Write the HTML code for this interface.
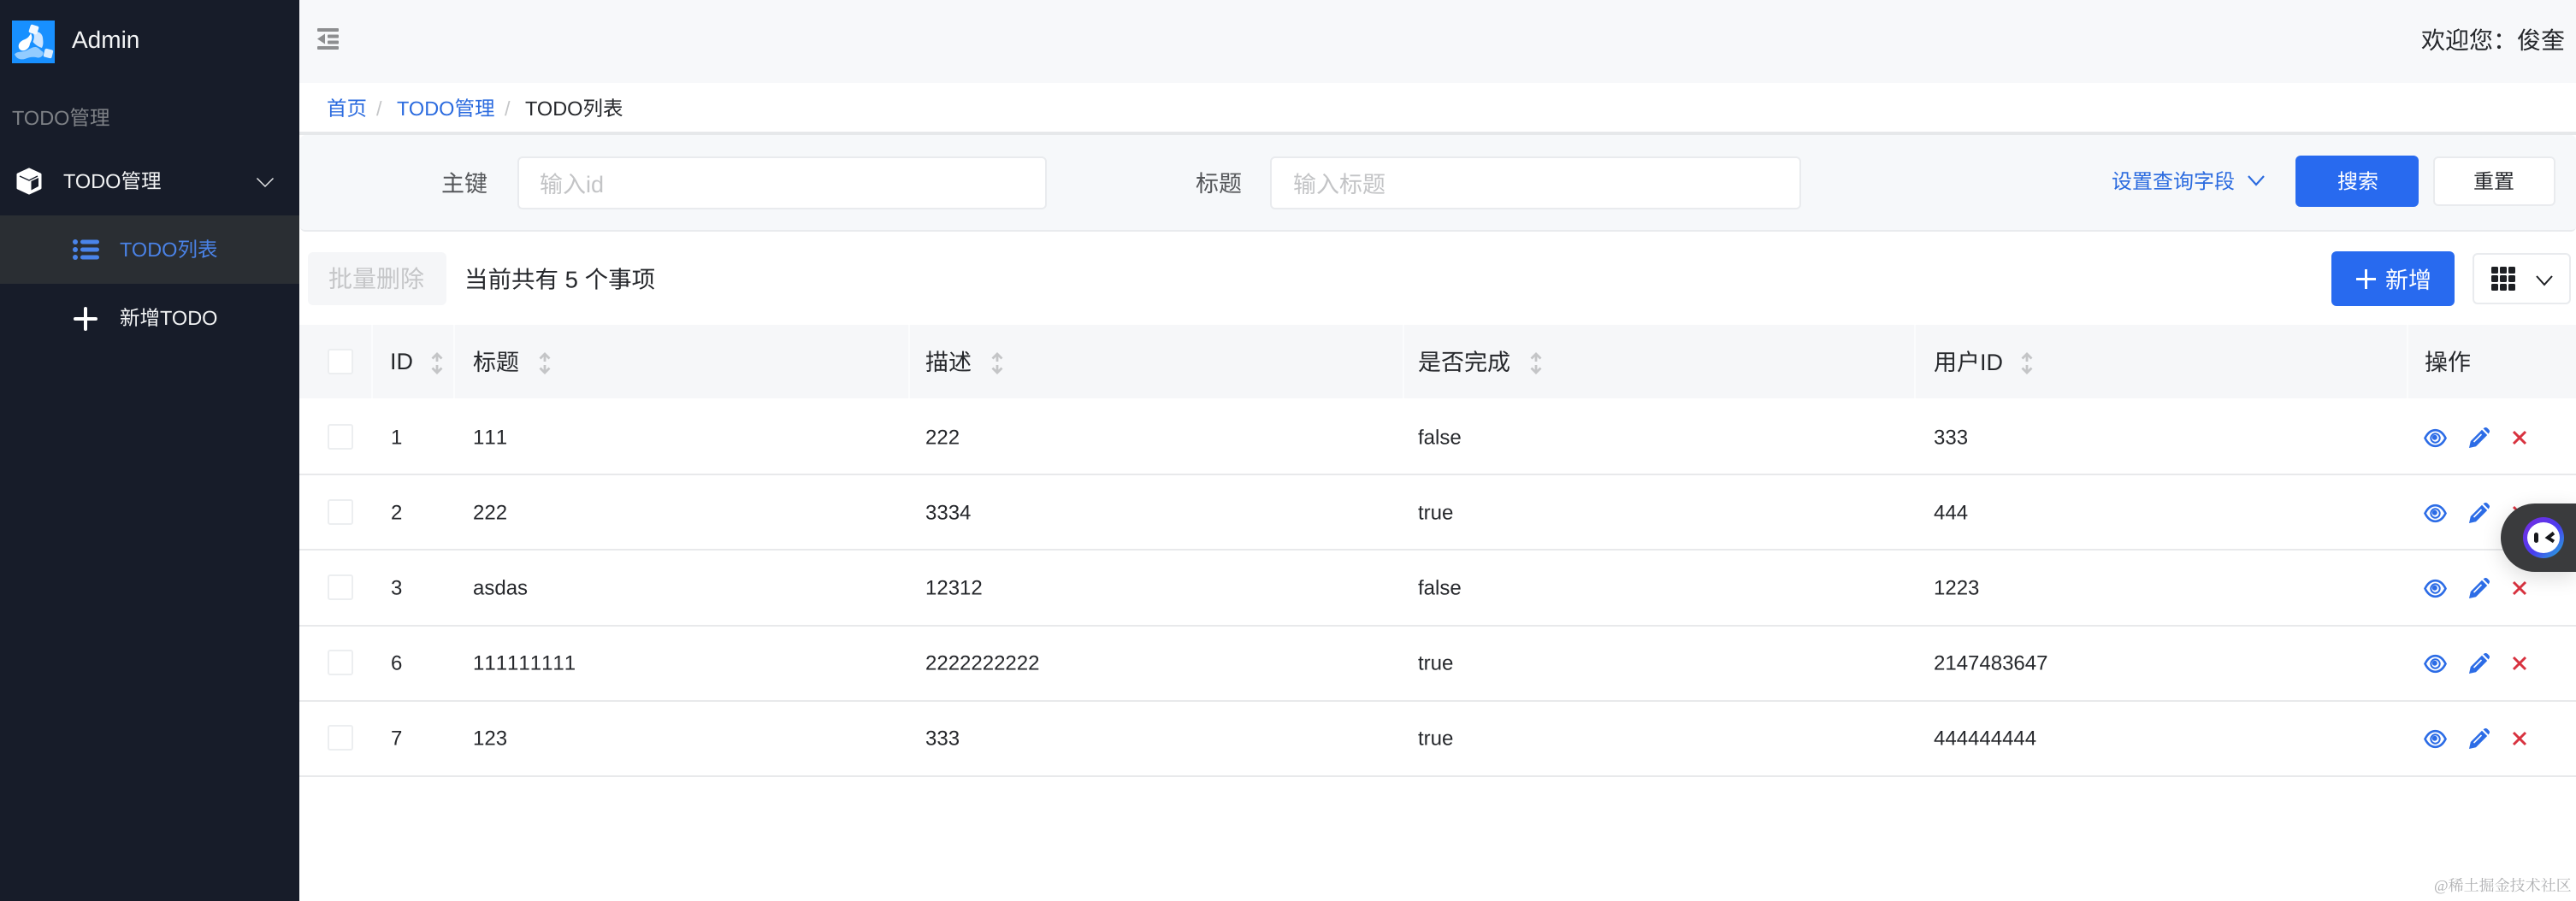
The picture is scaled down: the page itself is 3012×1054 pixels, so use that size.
<!DOCTYPE html>
<html lang="zh-CN">
<head>
<meta charset="utf-8">
<title>Admin</title>
<style>
html,body{margin:0;padding:0;width:3012px;height:1054px;overflow:hidden;background:#fff}
body{position:relative;font-family:"Liberation Sans","Noto Sans CJK SC",sans-serif;color:#222;text-rendering:geometricPrecision}
.a{position:absolute;box-sizing:border-box}
.t{position:absolute;white-space:nowrap;transform:translateY(-50%);line-height:1.2}
svg{position:absolute;overflow:visible}
.cell{font-size:24px;color:#26282c;font-kerning:none}
.hd{font-size:27px;color:#26282c}
.line{position:absolute;left:350px;width:2662px;height:2px;background:#e8e9eb}
.cb{position:absolute;left:383px;width:30px;height:30px;border:2px solid #eceef0;border-radius:3px;background:#fff;box-sizing:border-box}
.sep{position:absolute;top:380px;width:2px;height:86px;background:#fbfcfd}
</style>
</head>
<body>
<svg width="0" height="0" style="position:absolute">
<defs>
<symbol id="sort" viewBox="0 0 14 24" overflow="visible"><path d="M7 10V1M1.500 6.500L7 1L12.500 6.500M7 14V23M1.500 17.500L7 23L12.500 17.500" fill="none" stroke="#c4c5c7" stroke-width="2.800"/></symbol>
<symbol id="eye" viewBox="0 0 27 21" overflow="visible"><path d="M1.500 10.500C5 3.500 9 1.200 13.500 1.200S22 3.500 25.500 10.500C22 17.500 18 19.800 13.500 19.800S5 17.500 1.500 10.500Z" fill="none" stroke="#2c6ce6" stroke-width="2.600"/><circle cx="13.500" cy="10.500" r="5.200" fill="none" stroke="#2c6ce6" stroke-width="2"/><circle cx="12.800" cy="9.800" r="3" fill="#2c6ce6"/></symbol>
<symbol id="pen" viewBox="0 0 24 24" overflow="visible"><path d="M0 24L1.800 16L15 2.800L21.200 9L8 22.200Z" fill="#2c6ce6"/><path d="M16.500 1.300L17.800.5C19-.3 20.400-.1 21.500.9L23.200 2.600C24.200 3.700 24.300 4.800 23.500 6L22.700 7.500Z" fill="#2c6ce6"/><path d="M5.500 17L14.500 8" stroke="#fff" stroke-width="1.600"/></symbol>
<symbol id="del" viewBox="0 0 16 14" overflow="visible"><path d="M1 0L15 14M15 0L1 14" stroke="#d8323f" stroke-width="3" fill="none"/></symbol>
</defs>
</svg>

<!-- Sidebar -->
<div class="a" style="left:0;top:0;width:350px;height:1054px;background:#171c29"></div>
<div class="a" style="left:14px;top:24px;width:50px;height:50px;background:#1890ff"></div>
<svg style="left:14px;top:24px" width="50" height="50" viewBox="0 0 50 50">
<path d="M3 39.500C6 36 10 37 14 36C19 35 23 30.500 28 31C32 32 33 35 36 36.500C38 40 34 44 30 43.500C24 42 20 43 15 45C9 46.500 5 44 3 39.500Z" fill="#93ccff"/>
<path d="M24.500 14C29 11.500 35 14 36 20C36.500 25 37 28 35 32C31 31 27 28 24.500 25C26 21 26.500 18 24.500 14Z" fill="#cfe6ff"/>
<path d="M22 15C25 20 22.500 24 21 27C20.500 34 12 38 8.500 33C6 28 10 24 14 22.500C18 21 20 19 22 15Z" fill="#fff"/>
<rect x="20.500" y="5.500" width="10" height="10" rx="2" transform="rotate(18 25.500 10.500)" fill="#f2f8ff"/>
<rect x="37.500" y="33.500" width="10" height="10" rx="2" transform="rotate(14 42.500 38.500)" fill="#d8ecff"/>
</svg>
<div class="t" style="left:84px;top:47px;font-size:28px;color:#f4f5f6">Admin</div>
<div class="t" style="left:14px;top:138px;font-size:23.500px;color:#7e8186">TODO管理</div>

<svg style="left:18px;top:196px" width="32" height="32" viewBox="0 0 32 32">
<path d="M16 2L29 8V24L16 30L3 24V8Z" fill="#fff" stroke="#fff" stroke-width="3" stroke-linejoin="round"/>
<path d="M18.500 16L27 12V22L18.500 26.500Z" fill="#171c29"/>
<path d="M5 10L16 15L26 10" fill="none" stroke="#171c29" stroke-width="1.400"/>
</svg>
<div class="t" style="left:74px;top:212px;font-size:23.500px;color:#f2f3f4">TODO管理</div>
<svg style="left:300px;top:208px" width="20" height="11" viewBox="0 0 20 11"><path d="M.5.5L10 10L19.500.5" fill="none" stroke="#e4e5e7" stroke-width="1.500"/></svg>

<div class="a" style="left:0;top:252px;width:350px;height:80px;background:#2a2e33"></div>
<svg style="left:85px;top:279px" width="31" height="26" viewBox="0 0 31 26" fill="#4a84ea">
<circle cx="3" cy="4" r="3"/><circle cx="3" cy="13" r="3"/><circle cx="3" cy="22" r="3"/>
<rect x="9" y="1.500" width="22" height="5" rx="2.500"/><rect x="9" y="10.500" width="22" height="5" rx="2.500"/><rect x="9" y="19.500" width="22" height="5" rx="2.500"/>
</svg>
<div class="t" style="left:140px;top:292px;font-size:23.500px;color:#4a82e6">TODO列表</div>

<svg style="left:87px;top:360px" width="26" height="26" viewBox="0 0 26 26"><path d="M13 1V25M1 13H25" stroke="#fff" stroke-width="4" stroke-linecap="round"/></svg>
<div class="t" style="left:140px;top:372px;font-size:23.500px;color:#f2f3f4">新增TODO</div>

<!-- Header -->
<div class="a" style="left:350px;top:0;width:2662px;height:97px;background:#f7f8fa"></div>
<svg style="left:371px;top:33px" width="25" height="25" viewBox="0 0 25 25" fill="#8d8e90">
<rect x="0" y="0" width="25" height="4" rx="1"/><rect x="12" y="7.500" width="13" height="4" rx="1"/><rect x="12" y="14.500" width="13" height="4" rx="1"/><rect x="0" y="21" width="25" height="4" rx="1"/>
<path d="M0 12.500L9 6.500V18.500Z"/>
</svg>
<div class="t" style="left:2831px;top:48px;font-size:28px;color:#26282c">欢迎您：俊奎</div>

<!-- Breadcrumb -->
<div class="t" style="left:382px;top:127px;font-size:23.500px;color:#2b6bdf">首页</div>
<div class="t" style="left:440px;top:127px;font-size:23.500px;color:#c5c6c8">/</div>
<div class="t" style="left:464px;top:127px;font-size:23.500px;color:#2b6bdf">TODO管理</div>
<div class="t" style="left:590px;top:127px;font-size:23.500px;color:#c5c6c8">/</div>
<div class="t" style="left:614px;top:127px;font-size:23.500px;color:#26282c">TODO列表</div>
<div class="a" style="left:350px;top:154px;width:2662px;height:4px;background:#e6e8ea"></div>

<!-- Search panel -->
<div class="a" style="left:351px;top:158px;width:2661px;height:113px;background:#f6f8fa;border-bottom:2px solid #e9ebee;border-radius:6px"></div>
<div class="t" style="left:516px;top:215px;font-size:27px;color:#55575a">主键</div>
<div class="a" style="left:605px;top:183px;width:619px;height:62px;background:#fff;border:2px solid #e9ebee;border-radius:6px"></div>
<div class="t" style="left:631px;top:216px;font-size:27px;color:#c3c4c6">输入id</div>
<div class="t" style="left:1398px;top:215px;font-size:27px;color:#55575a">标题</div>
<div class="a" style="left:1485px;top:183px;width:621px;height:62px;background:#fff;border:2px solid #e9ebee;border-radius:6px"></div>
<div class="t" style="left:1512px;top:216px;font-size:27px;color:#c3c4c6">输入标题</div>
<div class="t" style="left:2469px;top:214px;font-size:24px;color:#2b6bdf">设置查询字段</div>
<svg style="left:2628px;top:205px" width="20" height="12" viewBox="0 0 20 12"><path d="M1 1L10 11L19 1" fill="none" stroke="#2b6bdf" stroke-width="2.200"/></svg>
<div class="a" style="left:2684px;top:182px;width:144px;height:60px;background:#286aef;border-radius:6px"></div>
<div class="t" style="left:2733px;top:214px;font-size:24px;color:#fff">搜索</div>
<div class="a" style="left:2845px;top:183px;width:143px;height:58px;background:#fff;border:2px solid #e9ebee;border-radius:6px"></div>
<div class="t" style="left:2892px;top:214px;font-size:24px;color:#26282c">重置</div>

<!-- Toolbar -->
<div class="a" style="left:360px;top:295px;width:162px;height:62px;background:#f5f6f8;border-radius:6px"></div>
<div class="t" style="left:384px;top:327px;font-size:28px;color:#c5c6c8">批量删除</div>
<div class="t" style="left:543px;top:327px;font-size:27.500px;color:#26282c">当前共有 5 个事项</div>
<div class="a" style="left:2726px;top:294px;width:144px;height:64px;background:#286aef;border-radius:6px"></div>
<svg style="left:2755px;top:315px" width="23" height="23" viewBox="0 0 23 23"><path d="M11.500 0V23M0 11.500H23" stroke="#fff" stroke-width="3"/></svg>
<div class="t" style="left:2789px;top:328px;font-size:27px;color:#fff">新增</div>
<div class="a" style="left:2891px;top:296px;width:115px;height:60px;background:#fff;border:2px solid #e9ebee;border-radius:6px"></div>
<svg style="left:2913px;top:312px" width="28" height="28" viewBox="0 0 28 28" fill="#1d1f23">
<rect x="0" y="0" width="8" height="8" rx="1.500"/><rect x="10" y="0" width="8" height="8" rx="1.500"/><rect x="20" y="0" width="8" height="8" rx="1.500"/>
<rect x="0" y="10" width="8" height="8" rx="1.500"/><rect x="10" y="10" width="8" height="8" rx="1.500"/><rect x="20" y="10" width="8" height="8" rx="1.500"/>
<rect x="0" y="20" width="8" height="8" rx="1.500"/><rect x="10" y="20" width="8" height="8" rx="1.500"/><rect x="20" y="20" width="8" height="8" rx="1.500"/>
</svg>
<svg style="left:2965px;top:322px" width="20" height="12" viewBox="0 0 20 12"><path d="M1 1L10 11L19 1" fill="none" stroke="#1d1f23" stroke-width="2"/></svg>

<!-- Table header -->
<div class="a" style="left:350px;top:380px;width:2662px;height:86px;background:#f6f7f9"></div>
<div class="sep" style="left:434px"></div>
<div class="sep" style="left:530px"></div>
<div class="sep" style="left:1062px"></div>
<div class="sep" style="left:1640px"></div>
<div class="sep" style="left:2238px"></div>
<div class="sep" style="left:2814px"></div>
<div class="cb" style="top:408px"></div>
<div class="t hd" style="left:456px;top:423px">ID</div>
<svg style="left:504px;top:413px" width="14" height="24"><use href="#sort"/></svg>
<div class="t hd" style="left:553px;top:424px">标题</div>
<svg style="left:630px;top:413px" width="14" height="24"><use href="#sort"/></svg>
<div class="t hd" style="left:1082px;top:424px">描述</div>
<svg style="left:1159px;top:413px" width="14" height="24"><use href="#sort"/></svg>
<div class="t hd" style="left:1658px;top:424px">是否完成</div>
<svg style="left:1789px;top:413px" width="14" height="24"><use href="#sort"/></svg>
<div class="t hd" style="left:2261px;top:424px">用户ID</div>
<svg style="left:2363px;top:413px" width="14" height="24"><use href="#sort"/></svg>
<div class="t hd" style="left:2835px;top:424px">操作</div>

<!-- Row 1 -->
<div class="cb" style="top:496px"></div>
<div class="t cell" style="left:457px;top:513px">1</div>
<div class="t cell" style="left:553px;top:513px">111</div>
<div class="t cell" style="left:1082px;top:513px">222</div>
<div class="t cell" style="left:1658px;top:513px">false</div>
<div class="t cell" style="left:2261px;top:513px">333</div>
<svg style="left:2834px;top:502px" width="27" height="21"><use href="#eye"/></svg>
<svg style="left:2887px;top:500px" width="24" height="24"><use href="#pen"/></svg>
<svg style="left:2938px;top:505px" width="16" height="14"><use href="#del"/></svg>
<div class="line" style="top:554px"></div>

<!-- Row 2 -->
<div class="cb" style="top:584px"></div>
<div class="t cell" style="left:457px;top:601px">2</div>
<div class="t cell" style="left:553px;top:601px">222</div>
<div class="t cell" style="left:1082px;top:601px">3334</div>
<div class="t cell" style="left:1658px;top:601px">true</div>
<div class="t cell" style="left:2261px;top:601px">444</div>
<svg style="left:2834px;top:590px" width="27" height="21"><use href="#eye"/></svg>
<svg style="left:2887px;top:588px" width="24" height="24"><use href="#pen"/></svg>
<svg style="left:2938px;top:593px" width="16" height="14"><use href="#del"/></svg>
<div class="line" style="top:642px"></div>

<!-- Row 3 -->
<div class="cb" style="top:672px"></div>
<div class="t cell" style="left:457px;top:689px">3</div>
<div class="t cell" style="left:553px;top:689px">asdas</div>
<div class="t cell" style="left:1082px;top:689px">12312</div>
<div class="t cell" style="left:1658px;top:689px">false</div>
<div class="t cell" style="left:2261px;top:689px">1223</div>
<svg style="left:2834px;top:678px" width="27" height="21"><use href="#eye"/></svg>
<svg style="left:2887px;top:676px" width="24" height="24"><use href="#pen"/></svg>
<svg style="left:2938px;top:681px" width="16" height="14"><use href="#del"/></svg>
<div class="line" style="top:731px"></div>

<!-- Row 4 -->
<div class="cb" style="top:760px"></div>
<div class="t cell" style="left:457px;top:777px">6</div>
<div class="t cell" style="left:553px;top:777px">111111111</div>
<div class="t cell" style="left:1082px;top:777px">2222222222</div>
<div class="t cell" style="left:1658px;top:777px">true</div>
<div class="t cell" style="left:2261px;top:777px">2147483647</div>
<svg style="left:2834px;top:766px" width="27" height="21"><use href="#eye"/></svg>
<svg style="left:2887px;top:764px" width="24" height="24"><use href="#pen"/></svg>
<svg style="left:2938px;top:769px" width="16" height="14"><use href="#del"/></svg>
<div class="line" style="top:819px"></div>

<!-- Row 5 -->
<div class="cb" style="top:848px"></div>
<div class="t cell" style="left:457px;top:865px">7</div>
<div class="t cell" style="left:553px;top:865px">123</div>
<div class="t cell" style="left:1082px;top:865px">333</div>
<div class="t cell" style="left:1658px;top:865px">true</div>
<div class="t cell" style="left:2261px;top:865px">444444444</div>
<svg style="left:2834px;top:854px" width="27" height="21"><use href="#eye"/></svg>
<svg style="left:2887px;top:852px" width="24" height="24"><use href="#pen"/></svg>
<svg style="left:2938px;top:857px" width="16" height="14"><use href="#del"/></svg>
<div class="line" style="top:907px"></div>

<!-- Floating widget -->
<div class="a" style="left:2924px;top:589px;width:88px;height:80px;background:#3a3b3d;border-radius:40px 0 0 40px;box-shadow:0 6px 24px rgba(0,0,0,.14)"></div>
<svg style="left:2950px;top:605px" width="48" height="48" viewBox="0 0 48 48">
<defs><linearGradient id="g" x1="0" y1="0" x2="1" y2="1"><stop offset="0" stop-color="#7a2be0"/><stop offset=".55" stop-color="#4a3cf0"/><stop offset="1" stop-color="#1fb4d8"/></linearGradient></defs>
<circle cx="24" cy="24" r="24" fill="url(#g)"/>
<ellipse cx="24" cy="24" rx="19" ry="18" fill="#fff"/>
<rect x="13" y="18" width="5" height="12" rx="2.500" fill="#17181c"/>
<path d="M36 18.500L29 24L36 28.500" fill="none" stroke="#17181c" stroke-width="4"/>
</svg>

<!-- Watermark -->
<div class="t" style="left:2846px;top:1037px;font-size:18px;font-family:'Liberation Serif','Noto Serif CJK SC',serif;color:#b0b1b3">@稀土掘金技术社区</div>
</body>
</html>
